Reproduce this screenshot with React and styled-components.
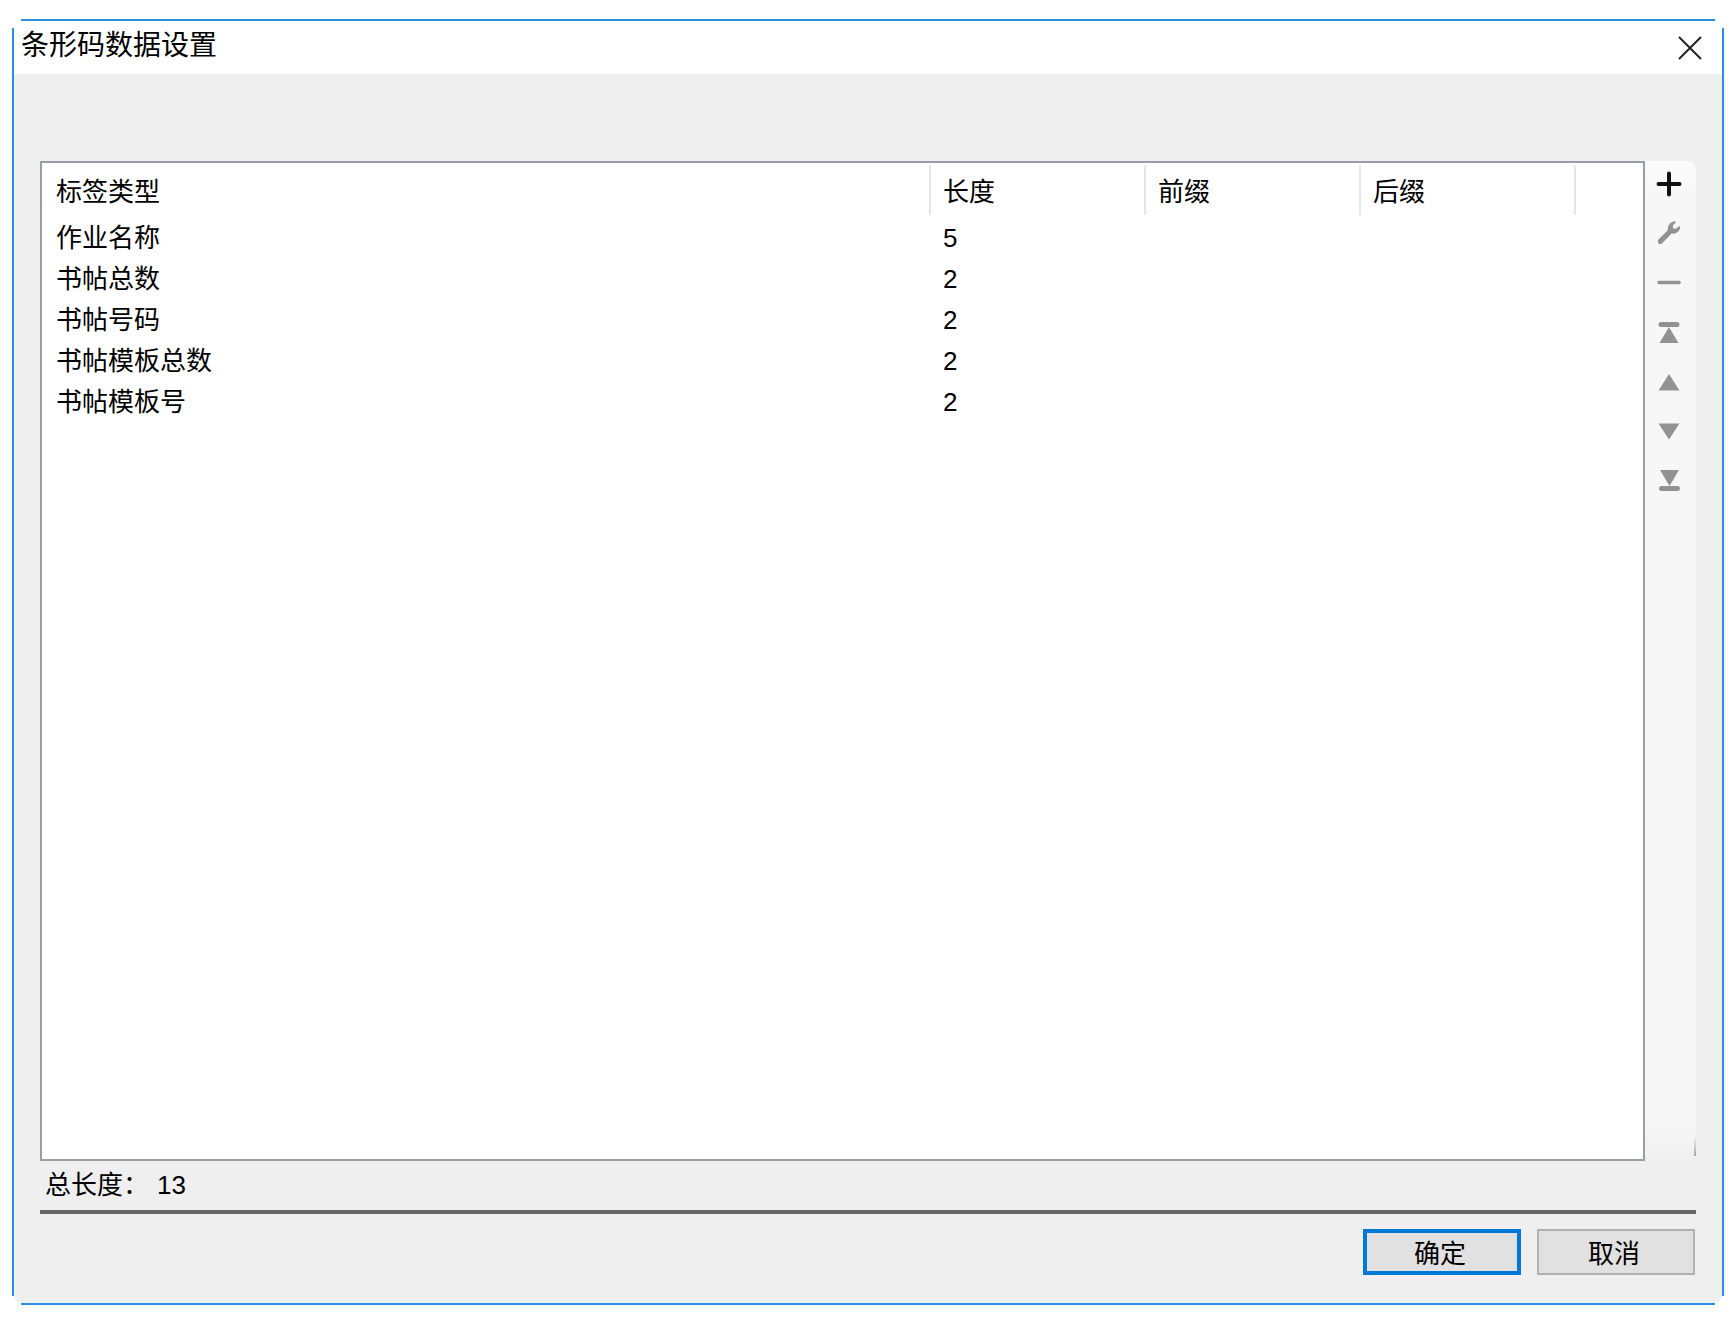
import * as React from 'react';
import styled, { createGlobalStyle, ThemeProvider } from 'styled-components';

const theme = {
  font: {
    family: '"Liberation Sans", "Noto Sans CJK SC", sans-serif',
    title: '28px',
    normal: '26px',
  },
  palette: {
    accent: '#0078d7',
    edge: '#2b8fe3',
    face: '#efefef',
    frame: '#9a9da6',
    separator: '#e6e6e6',
    rule: '#666666',
    text: '#000000',
    disabled: '#929292',
  },
};

const edgeColor = ({ theme }) => theme.palette.edge;
const faceColor = ({ theme }) => theme.palette.face;
const frameColor = ({ theme }) => theme.palette.frame;
const separatorColor = ({ theme }) => theme.palette.separator;
const normalFontSize = ({ theme }) => theme.font.normal;

const GlobalStyle = createGlobalStyle`
  * {
    box-sizing: border-box;
  }
  body {
    margin: 0;
    background: #ffffff;
    color: ${({ theme }) => theme.palette.text};
    font-family: ${({ theme }) => theme.font.family};
    font-size: ${normalFontSize};
  }
  button {
    font: inherit;
    color: inherit;
  }
`;

const Page = styled.div`
  display: flex;
  min-height: 100vh;
  padding: 19px 10px 16px 12px;
`;

/* The four edges stop short of the corners. */
const Dialog = styled.main`
  display: flex;
  flex: 1;
  flex-direction: column;
  padding: 2px;
  background:
    linear-gradient(${edgeColor}, ${edgeColor}) center top / calc(100% - 18px) 2px,
    linear-gradient(${edgeColor}, ${edgeColor}) center bottom / calc(100% - 18px) 2px,
    linear-gradient(${edgeColor}, ${edgeColor}) left center / 2px calc(100% - 18px),
    linear-gradient(${edgeColor}, ${edgeColor}) right center / 2px calc(100% - 18px);
  background-repeat: no-repeat;
`;

const TitleBar = styled.header`
  display: flex;
  justify-content: space-between;
  height: 53px;
  padding: 0 16px 0 7px;
`;

const Title = styled.h1`
  margin: 0;
  font-size: ${({ theme }) => theme.font.title};
  font-weight: 400;
  line-height: 50px;
`;

const CloseButton = styled.button`
  display: flex;
  align-items: center;
  justify-content: center;
  width: 32px;
  padding: 0;
  border: none;
  background: none;
`;

const Body = styled.div`
  display: flex;
  flex: 1;
  flex-direction: column;
  padding: 87px 26px 28px;
  border-radius: 0 0 8px 8px;
  background: ${faceColor};
`;

const Content = styled.div`
  display: flex;
  flex: 1;
`;

const ListBox = styled.div`
  flex: 1;
  border: 2px solid ${frameColor};
  background: #ffffff;
`;

const Table = styled.table`
  width: 100%;
  border-collapse: collapse;
  table-layout: fixed;
`;

const HeadCell = styled.th`
  width: ${({ $width }) => $width || 'auto'};
  height: 54px;
  padding: 4px 14px 0;
  font-weight: 400;
  line-height: 40px;
  text-align: left;
  &:not(:first-child) {
    background: linear-gradient(${separatorColor}, ${separatorColor}) left center / 2px 50px no-repeat;
  }
`;

const Cell = styled.td`
  height: 41px;
  padding: 0 14px;
  line-height: 40px;
`;

const ToolBar = styled.div`
  display: flex;
  flex-direction: column;
  width: 51px;
  border-radius: 0 8px 0 0;
  background:
    linear-gradient(to bottom, transparent, #a8a8a8) right bottom 5px / 2px 20px no-repeat,
    linear-gradient(to bottom, #fbfbfb, #f7f7f7 40px, #f7f7f7 calc(100% - 40px), ${faceColor});
`;

const ToolButton = styled.button`
  display: flex;
  align-items: center;
  justify-content: center;
  height: 49px;
  padding: 0 4px 2px 0;
  border: none;
  background: none;
  color: #111111;
  &:disabled {
    color: ${({ theme }) => theme.palette.disabled};
  }
`;

const Total = styled.div`
  display: flex;
  gap: 8px;
  height: 49px;
  padding: 0 5px;
  line-height: 48px;
`;

const Rule = styled.hr`
  width: 100%;
  height: 4px;
  margin: 0;
  border: none;
  background: ${({ theme }) => theme.palette.rule};
`;

const Actions = styled.footer`
  display: flex;
  justify-content: flex-end;
  gap: 16px;
  padding: 15px 1px 0 0;
`;

const ActionButton = styled.button`
  width: 158px;
  height: 46px;
  padding: 4px 4px 0 0;
  border: ${({ $primary, theme }) =>
    $primary ? `4px solid ${theme.palette.accent}` : '2px solid #b2b2b2'};
  background: #e1e1e1;
  line-height: 34px;
`;

const columns = [
  { key: 'type', label: '标签类型' },
  { key: 'length', label: '长度', width: '215px' },
  { key: 'prefix', label: '前缀', width: '215px' },
  { key: 'suffix', label: '后缀', width: '215px' },
  { key: 'filler', label: '', width: '69px' },
];

const rows = [
  { type: '作业名称', length: 5 },
  { type: '书帖总数', length: 2 },
  { type: '书帖号码', length: 2 },
  { type: '书帖模板总数', length: 2 },
  { type: '书帖模板号', length: 2 },
];

const tools = [
  {
    label: '添加',
    enabled: true,
    icon: <path d="M13 2.500v21M2.500 13h21" stroke="currentColor" strokeWidth="4" strokeLinecap="round" />,
  },
  {
    label: '编辑',
    icon: (
      <path
        d="M2.400 19.400 11.800 10.200C11.200 6.400 14.200 1.400 19.200 1.300L20 2.200 17 5.200V8.400L20.400 8.600 23.400 6 24.200 7C24 11.200 20.400 14.200 15.600 13.600L6.200 23.200C3.600 25.400 .4 22.200 2.400 19.400Z"
        fill="currentColor"
      />
    ),
  },
  {
    label: '删除',
    icon: <path d="M3 13.500h20" stroke="currentColor" strokeWidth="3.500" strokeLinecap="round" />,
  },
  {
    label: '移到顶部',
    icon: (
      <path
        d="M5 4h16a2.500 2.500 0 0 1 0 5H5a2.500 2.500 0 0 1 0-5ZM13 9 22.500 25h-19Z"
        fill="currentColor"
      />
    ),
  },
  { label: '上移', icon: <path d="M13 7 23.500 23.500h-21Z" fill="currentColor" /> },
  { label: '下移', icon: <path d="M2.500 7.500h21L13 23.500Z" fill="currentColor" /> },
  {
    label: '移到底部',
    icon: (
      <path
        d="M4 5h19L13.500 21ZM5.500 21h16a2.500 2.500 0 0 1 0 5h-16a2.500 2.500 0 0 1 0-5Z"
        fill="currentColor"
      />
    ),
  },
];

function LabelTable() {
  return (
    <Table>
      <thead>
        <tr>
          {columns.map(column => (
            <HeadCell key={column.key} $width={column.width}>
              {column.label}
            </HeadCell>
          ))}
        </tr>
      </thead>
      <tbody>
        {rows.map(row => (
          <tr key={row.type}>
            {columns.map(column => (
              <Cell key={column.key}>{row[column.key]}</Cell>
            ))}
          </tr>
        ))}
      </tbody>
    </Table>
  );
}

function App() {
  const total = rows.reduce((sum, row) => sum + row.length, 0);

  return (
    <ThemeProvider theme={theme}>
      <GlobalStyle />
      <Page>
        <Dialog>
          <TitleBar>
            <Title>条形码数据设置</Title>
            <CloseButton aria-label="关闭">
              <svg width="24" height="24" viewBox="0 0 24 24" fill="none">
                <path d="M1 1l22 22M23 1 1 23" stroke="#222222" strokeWidth="2" />
              </svg>
            </CloseButton>
          </TitleBar>
          <Body>
            <Content>
              <ListBox>
                <LabelTable />
              </ListBox>
              <ToolBar>
                {tools.map(tool => (
                  <ToolButton key={tool.label} aria-label={tool.label} disabled={!tool.enabled}>
                    <svg width="26" height="28" viewBox="0 0 26 28" fill="none">
                      {tool.icon}
                    </svg>
                  </ToolButton>
                ))}
              </ToolBar>
            </Content>
            <Total>
              <span>总长度：</span>
              <span>{total}</span>
            </Total>
            <Rule />
            <Actions>
              <ActionButton $primary>确定</ActionButton>
              <ActionButton>取消</ActionButton>
            </Actions>
          </Body>
        </Dialog>
      </Page>
    </ThemeProvider>
  );
}

export default App;
